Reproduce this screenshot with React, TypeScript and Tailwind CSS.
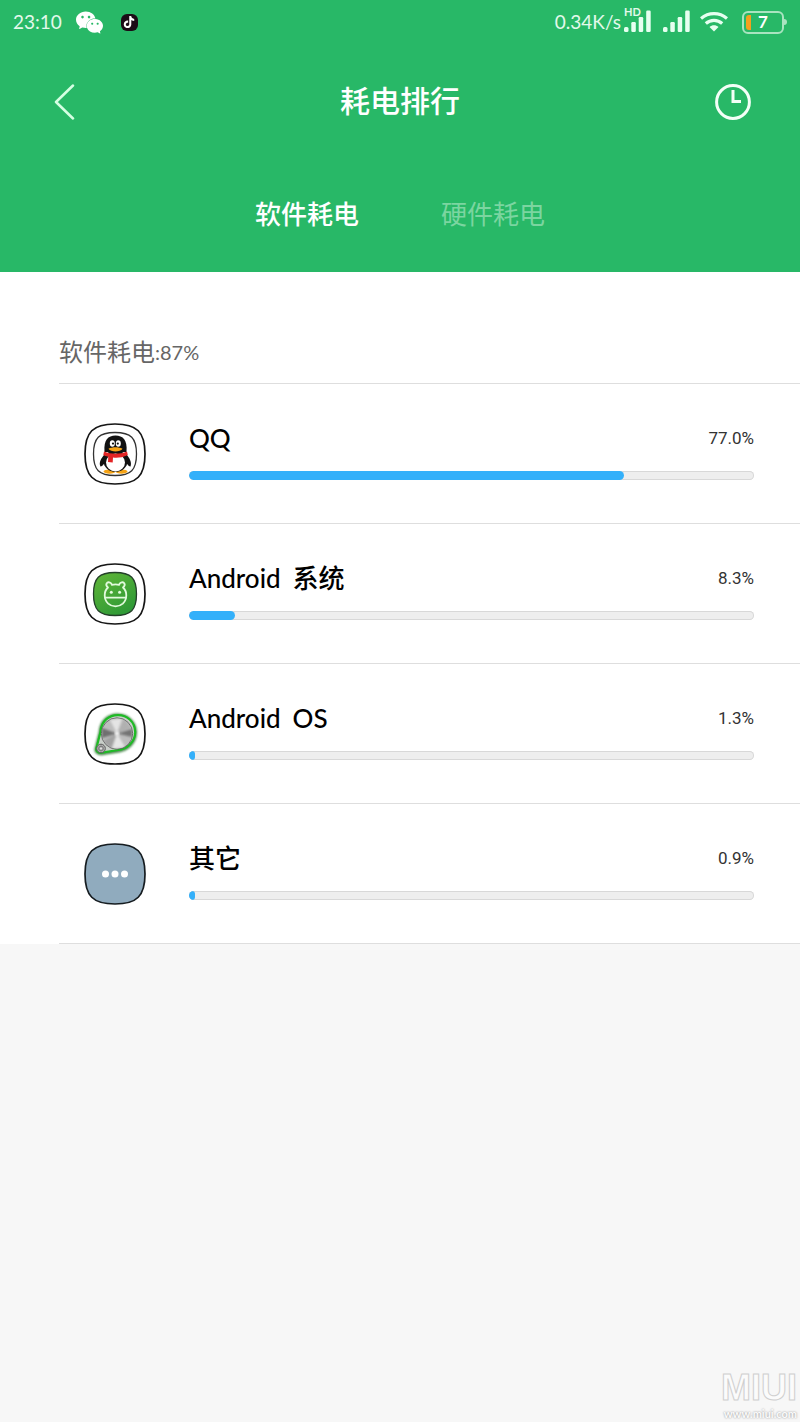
import { SiTiktok, SiWechat } from "react-icons/si";

const SQUIRCLE =
  "M31 1 C53 1 61 9 61 31 C61 53 53 61 31 61 C9 61 1 53 1 31 C1 9 9 1 31 1 Z";
const INNER_SQUIRCLE =
  "M31 9.5 C47 9.5 52.5 15 52.5 31 C52.5 47 47 52.5 31 52.5 C15 52.5 9.5 47 9.5 31 C9.5 15 15 9.5 31 9.5 Z";

function QQIcon() {
  return (
    <svg viewBox="0 0 62 62" className="size-[62px] shrink-0" aria-hidden="true">
      <path d={SQUIRCLE} fill="#fff" stroke="#161616" strokeWidth="1.7" />
      <path d={INNER_SQUIRCLE} fill="#fff" stroke="#333" strokeWidth="1.3" />
      <ellipse cx="25.5" cy="48.6" rx="6" ry="2.1" fill="#f5a315" />
      <ellipse cx="37.5" cy="48.6" rx="6" ry="2.1" fill="#f5a315" />
      <path d="M21 31 C17 35 14.500 40 16.500 43.500 C18 44 20 41 21 39 Z M42 31 C46 35 48 40 46.500 43.500 C45 44 43 41 42 39 Z" fill="#111" />
      <ellipse cx="31.500" cy="38" rx="12" ry="10.800" fill="#111" />
      <ellipse cx="31.500" cy="39.500" rx="9.500" ry="9" fill="#fff" />
      <path d="M20.500 29 C19.500 17 24 12.500 31.500 12.500 C39 12.500 43.500 17 42.500 29 Z" fill="#111" />
      <ellipse cx="28.300" cy="20.500" rx="2.500" ry="3.200" fill="#fff" />
      <ellipse cx="34.300" cy="20.500" rx="2.500" ry="3.200" fill="#fff" />
      <circle cx="29" cy="20.600" r="1.100" fill="#111" />
      <circle cx="33.800" cy="20.600" r="1.100" fill="#111" />
      <path d="M24.500 25.800 C28 23.800 35 23.800 38.500 25.800 C36 29.500 27 29.500 24.500 25.800 Z" fill="#f5a315" />
      <path d="M20 28.500 C27 31.500 36 31.500 43 28.500 L43.800 32 C38 34.800 33 35 29 34.500 L28.700 39.500 L24 39 L24.300 33.700 C22 33.200 20.500 32.700 19.300 32 Z" fill="#e32425" />
    </svg>
  );
}

function AndroidSystemIcon() {
  return (
    <svg viewBox="0 0 62 62" className="size-[62px] shrink-0" aria-hidden="true">
      <defs>
        <linearGradient id="system-green" x1="0" y1="0" x2="0.6" y2="1">
          <stop offset="0" stopColor="#62b738" />
          <stop offset="1" stopColor="#2f9a36" />
        </linearGradient>
      </defs>
      <path d={SQUIRCLE} fill="#fff" stroke="#161616" strokeWidth="1.7" />
      <path d={INNER_SQUIRCLE} fill="url(#system-green)" stroke="#24402a" strokeWidth="1.3" />
      <g fill="none" stroke="#e2fadd" strokeWidth="1.800" strokeLinecap="round" strokeLinejoin="round">
        <path d="M24 24.500 C20.500 21.500 23 18.200 26.300 19.800 C27.200 20.300 27.600 21 27.800 21.800 C30 21.200 33 21.200 35.200 21.800 C35.400 21 35.800 20.300 36.700 19.800 C40 18.200 42.500 21.500 39 24.500 C43.500 28.500 43.300 36.500 38.800 40.600 C34.500 44.300 28.500 44.300 24.200 40.600 C19.700 36.500 19.500 28.500 24 24.500 Z" />
        <path d="M21.300 34.700 H41.700" />
      </g>
      <circle cx="27.300" cy="29.300" r="1.500" fill="#e2fadd" />
      <circle cx="35.600" cy="29.300" r="1.500" fill="#e2fadd" />
    </svg>
  );
}

const DIAL_WEDGES = [
  { d: "M33 30.500 L18 25 L18 35 Z", fill: "#6f6f6f" },
  { d: "M33 30.500 L48 26 L48 34 Z", fill: "#737373" },
  { d: "M33 30.500 L26 17 L38 15.500 Z", fill: "#e4e4e4" },
  { d: "M33 30.500 L28 46 L41 44 Z", fill: "#e6e6e6" },
  { d: "M33 30.500 L19 38 L27 46 Z", fill: "#a2a2a2" },
  { d: "M33 30.500 L40 16 L47 25 Z", fill: "#b0b0b0" },
];

function AndroidOSIcon() {
  return (
    <svg viewBox="0 0 62 62" className="size-[62px] shrink-0" aria-hidden="true">
      <defs>
        <filter id="dial-glow" x="-20%" y="-20%" width="140%" height="140%">
          <feGaussianBlur stdDeviation="1.200" />
        </filter>
        <filter id="dial-sheen">
          <feGaussianBlur stdDeviation="1" />
        </filter>
        <clipPath id="dial-face">
          <circle cx="33" cy="30.500" r="15.200" />
        </clipPath>
        <radialGradient id="small-knob">
          <stop offset="0" stopColor="#fff" />
          <stop offset="0.500" stopColor="#777" />
          <stop offset="1" stopColor="#ddd" />
        </radialGradient>
      </defs>
      <path d={SQUIRCLE} fill="#fff" stroke="#161616" strokeWidth="1.7" />
      <path d="M15.500 30 C16.500 4 51.500 7 52 29 C52 40 44 47 35 48.500 L19 51 C14 52 10 49 12 44 Z" fill="#777" stroke="#3f8a43" strokeWidth="2" filter="url(#dial-glow)" />
      <path d="M16.500 29 C18 6 50.500 7 51.200 29 C51.200 39 43 46 34 47 L18 49.700 C14 50.300 11 48 12.700 44 Z" fill="#c9cfc9" stroke="#1ebb25" strokeWidth="2.200" />
      <circle cx="33" cy="30.500" r="15.700" fill="#bdbdbd" stroke="#555" strokeWidth="0.800" />
      <g clipPath="url(#dial-face)">
        <g filter="url(#dial-sheen)">
          {DIAL_WEDGES.map((wedge) => (
            <path key={wedge.d} d={wedge.d} fill={wedge.fill} />
          ))}
        </g>
        <circle cx="33" cy="30.500" r="2.200" fill="#f4f4f4" filter="url(#dial-sheen)" />
      </g>
      <circle cx="17" cy="45.500" r="4.300" fill="url(#small-knob)" stroke="#555" strokeWidth="1" />
    </svg>
  );
}

function OtherIcon() {
  return (
    <svg viewBox="0 0 62 62" className="size-[62px] shrink-0" aria-hidden="true">
      <path d={SQUIRCLE} fill="#90abbe" stroke="#161c20" strokeWidth="1.7" />
      <circle cx="21.500" cy="31" r="3.500" fill="#fff" />
      <circle cx="31" cy="31" r="3.500" fill="#fff" />
      <circle cx="40.500" cy="31" r="3.500" fill="#fff" />
    </svg>
  );
}

function SignalBars() {
  return (
    <svg viewBox="0 0 27 22" className="h-[22px] w-[27px]" fill="#e6fff0" aria-hidden="true">
      <rect x="0" y="17" width="4.500" height="5" rx="1.500" />
      <rect x="7.300" y="12" width="4.500" height="10" rx="1.200" />
      <rect x="14.700" y="7" width="4.500" height="15" rx="1.200" />
      <rect x="22.200" y="0.500" width="4.500" height="21.500" rx="1.200" />
    </svg>
  );
}

function WifiIcon() {
  return (
    <svg viewBox="0 0 28 20" className="h-5 w-7" fill="none" stroke="#e6fff0" strokeWidth="3.200" aria-hidden="true">
      <path d="M1 6.500 C8.500 0 19.500 0 27 6.500" />
      <path d="M5.800 11.500 C10.500 7.200 17.500 7.200 22.200 11.500" />
      <path d="M14 19.500 L9.500 15 C12 12.700 16 12.700 18.500 15 Z" fill="#e6fff0" stroke="none" />
    </svg>
  );
}

function StatusBar() {
  return (
    <div className="flex h-11 items-center px-[13px] text-[19px] text-[#e3f9eb]">
      <span>23:10</span>
      <SiWechat className="ml-3.5 size-[27px] text-white" />
      <span className="ml-[18px] flex size-[17px] items-center justify-center rounded-[6px] bg-[#1b0b16]">
        <SiTiktok className="size-3 text-white" />
      </span>
      <span className="ml-auto">0.34K/s</span>
      <span className="relative ml-[3px] pb-0.5">
        <span className="absolute -top-1 left-0 text-[11px] leading-none font-bold">HD</span>
        <SignalBars />
      </span>
      <span className="ml-3 pb-0.5">
        <SignalBars />
      </span>
      <span className="ml-2.5">
        <WifiIcon />
      </span>
      <span className="relative ml-3.5 flex h-[23px] w-[42px] items-center justify-center rounded-[6px] border-2 border-[#a9e4c0] text-[17px] font-bold text-white">
        <span className="absolute inset-y-0.5 left-0.5 w-[5px] rounded-l-[3px] bg-[#f5a01d]" />
        7
      </span>
      <span className="h-1.5 w-[3px] rounded-r-sm bg-[#a9e4c0]" />
    </div>
  );
}

const APPS = [
  { name: "QQ", percent: 77.0, fill: 77, Icon: QQIcon },
  { name: "Android 系统", percent: 8.3, fill: 8.2, Icon: AndroidSystemIcon },
  { name: "Android OS", percent: 1.3, fill: 1.1, Icon: AndroidOSIcon },
  { name: "其它", percent: 0.9, fill: 1.1, Icon: OtherIcon },
];

export default function App() {
  return (
    <div className="flex min-h-screen flex-col bg-[#f7f7f7] font-['Lato','Noto_Sans_CJK_SC',sans-serif]">
      <header className="bg-[#28b867] text-white">
        <StatusBar />
        <div className="flex h-[116px] items-center justify-between px-12">
          <button type="button" aria-label="返回" className="w-10 pl-1">
            <svg viewBox="0 0 24 36" className="h-9 w-6" fill="none" stroke="#d5ffe3" strokeWidth="2.500" strokeLinecap="round" strokeLinejoin="round" aria-hidden="true">
              <path d="M21 1.500 L4 18 L21 34.500" />
            </svg>
          </button>
          <h1 className="pb-1 text-[30px] leading-9 font-medium">耗电排行</h1>
          <button type="button" aria-label="历史" className="size-10">
            <svg viewBox="0 0 40 40" className="size-10" fill="none" stroke="#f3fff7" strokeWidth="3" aria-hidden="true">
              <circle cx="21" cy="20" r="16.400" />
              <path d="M21 8 V19.500 H29" />
            </svg>
          </button>
        </div>
        <nav className="flex h-28 justify-center gap-[82px] pt-9 text-[26px] leading-9">
          <button type="button" className="self-start font-medium">软件耗电</button>
          <button type="button" className="self-start text-[#7bd5a0]">硬件耗电</button>
        </nav>
      </header>
      <main className="bg-white pl-[59px]">
        <h2 className="flex items-center pt-[62px] pb-[13px] text-[20px] leading-9 text-[#666]">
          <span className="text-[24px]">软件耗电</span>
          <span>:87%</span>
        </h2>
        <ul className="border-t border-[#dedede]">
          {APPS.map(({ name, percent, fill, Icon }) => (
            <li key={name} className="flex h-[140px] items-center gap-[43px] border-b border-[#dedede] pr-[46px] pl-[25px]">
              <Icon />
              <div className="flex-1 pb-[7px]">
                <div className="flex h-9 items-center justify-between">
                  <span className="flex gap-3 text-[26px] leading-9 font-medium text-black">
                    {name.split(" ").map((word) => (
                      <span key={word}>{word}</span>
                    ))}
                  </span>
                  <span className="font-['Roboto',sans-serif] text-[17px] leading-9 text-[#333]">{percent.toFixed(1)}%</span>
                </div>
                <div
                  role="progressbar"
                  aria-label={name}
                  aria-valuenow={percent}
                  aria-valuemin={0}
                  aria-valuemax={100}
                  className="mt-[15px] h-[9px] overflow-hidden rounded-full bg-[#eee] inset-ring inset-ring-[#d8d8d8]"
                >
                  <div className="h-full rounded-full bg-[#34b0fa]" style={{ width: `${fill}%` }} />
                </div>
              </div>
            </li>
          ))}
        </ul>
      </main>
      <footer className="mt-auto flex flex-col items-end pr-[3px]">
        <span className="font-['Liberation_Sans',sans-serif] text-[36px] leading-9 font-bold text-[#fbfbfb] [-webkit-text-stroke:1px_#cfcfcf]">
          MIUI
        </span>
        <span className="text-[11px] leading-4 font-bold text-[#fbfbfb] [text-shadow:0_0_2px_#888]">www.miui.com</span>
      </footer>
    </div>
  );
}
